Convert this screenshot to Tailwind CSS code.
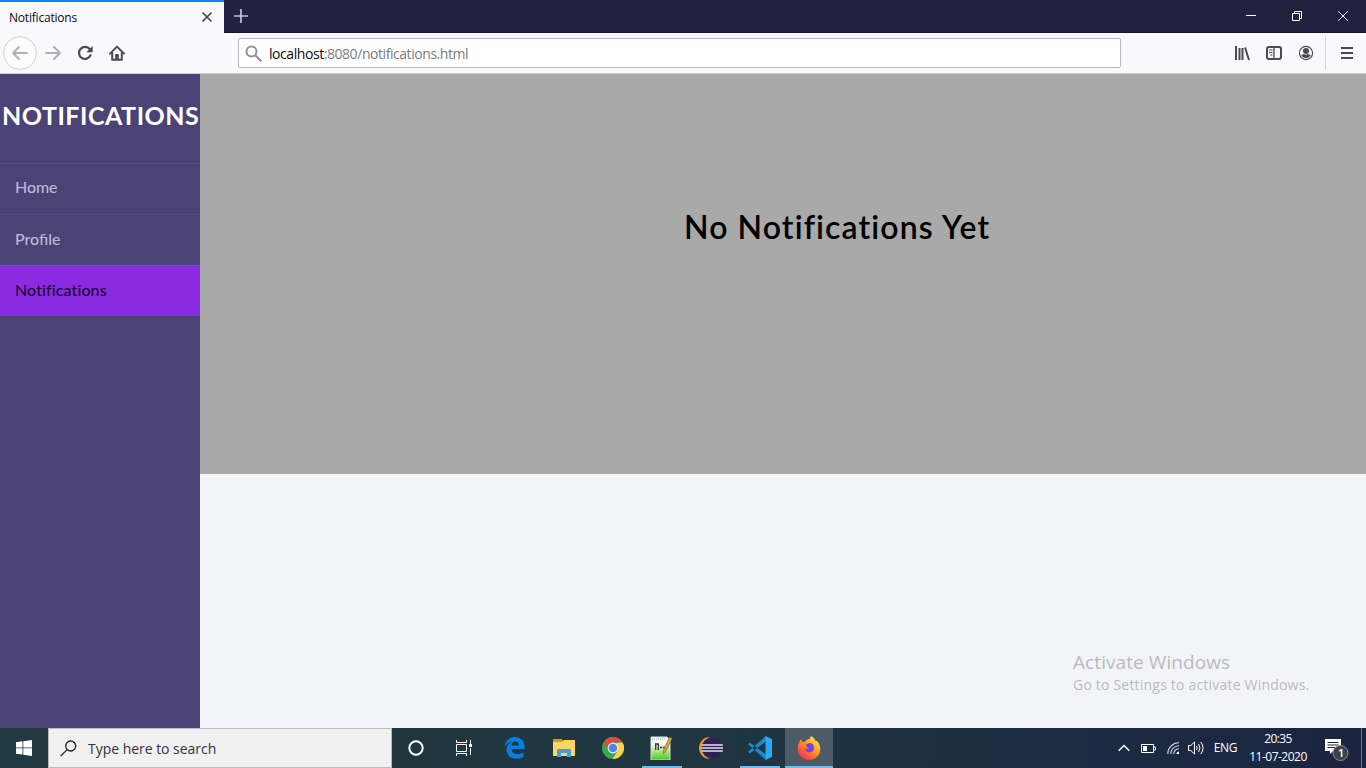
<!DOCTYPE html>
<html lang="en">
<head>
<meta charset="utf-8">
<title>Notifications</title>
<script src="https://cdn.jsdelivr.net/npm/@tailwindcss/browser@4"></script>
</head>
<body class="w-[1366px] h-[768px] overflow-hidden flex flex-col bg-[#f3f4f9] font-['Open_Sans',sans-serif] whitespace-nowrap">
<!-- tab strip -->
<header class="h-[33px] shrink-0 flex bg-[#20223f] border-b border-[#141629]">
  <div class="w-[224px] h-[33px] shrink-0 flex items-center justify-between bg-[#f9f9fb] border-t-2 border-[#0a84ff] pl-[9px] pr-[11px] text-[12px] text-[#0c0c0d]">
    <span id="tab" class="tracking-[-0.2px]">Notifications</span>
    <svg class="w-3 h-3 -mt-[2px]" viewBox="0 0 12 12" fill="none" stroke="#444448" stroke-width="1.6"><path d="M1.5 1.5l9 9M10.500 1.500l-9 9"/></svg>
  </div>
  <svg class="w-4 h-4 mt-2 ml-[9px]" viewBox="0 0 16 16" fill="none" stroke="#c4c4d4" stroke-width="1.7"><path d="M8 1v14M1 8h14"/></svg>
  <div class="ml-auto flex pt-[10px] pr-[17px] gap-[34px]">
    <svg class="w-3 h-3" viewBox="0 0 12 12" stroke="#fff"><path d="M1 5.500h10"/></svg>
    <svg class="w-3 h-3" viewBox="0 0 12 12" fill="none" stroke="#fff"><path d="M1.500 3.500h7v7h-7zM3.500 3.500v-2h7v7h-2"/></svg>
    <svg class="w-3 h-3" viewBox="0 0 12 12" fill="none" stroke="#e4e4ef"><path d="M1 1l10 10M11 1L1 11"/></svg>
  </div>
</header>
<!-- toolbar -->
<nav class="h-[41px] shrink-0 flex items-center bg-[#f9f9fb] border-b border-[#cfcfd2] pl-[3px]">
  <svg class="w-[34px] h-[34px]" viewBox="0 0 34 34" fill="none"><circle cx="17" cy="17" r="16.400" fill="#fcfcfd" stroke="#d0d0d3"/><path d="M24 17H10M16 11L10 17l6 6" stroke="#b0b0b2" stroke-width="2" stroke-linecap="round" stroke-linejoin="round"/></svg>
  <svg class="w-4 h-4 ml-2" viewBox="0 0 16 16" fill="none" stroke="#b0b0b2" stroke-width="2" stroke-linecap="round" stroke-linejoin="round"><path d="M1 8h14M9 2l6 6-6 6"/></svg>
  <svg class="w-4 h-4 ml-4" viewBox="0 0 16 16"><path d="M12.800 4.200A6 6 0 1 0 13.500 10.300" fill="none" stroke="#4a4a4f" stroke-width="2.200" stroke-linecap="round"/><path d="M15.600 1v6.200H9.400z" fill="#4a4a4f"/></svg>
  <svg class="w-4 h-4 ml-4" viewBox="0 0 16 16" fill="none" stroke="#4a4a4f" stroke-linejoin="round" stroke-linecap="round"><path d="M1 8.600L8 1.600l7 7" stroke-width="2"/><path d="M3.200 8v6.800h9.600V8" stroke-width="2"/><path d="M7 14v-4h2v4" stroke-width="1.800"/></svg>
  <div class="ml-[113px] w-[883px] h-[30px] flex items-center bg-white border border-[#b9b9bd] rounded-[2px] pl-[6px]">
    <svg class="w-[17px] h-[17px]" viewBox="0 0 17 17" fill="none" stroke="#929294" stroke-width="2" stroke-linecap="round"><circle cx="6.500" cy="6.500" r="5"/><path d="M10.300 10.300l5.500 5.500"/></svg>
    <span id="url" class="ml-[7px] text-[14px] text-[#7b7b7e] tracking-[-0.44px] font-['Open_Sans']"><span class="text-[#0c0c0d]">localhost</span>:8080/notifications.html</span>
  </div>
  <svg class="w-4 h-4 ml-[113px]" viewBox="0 0 16 16" stroke="#4a4a4f" stroke-width="2"><path d="M2 1v14M5.500 3v12M8.500 3v12M11 2.500L15 15"/></svg>
  <svg class="w-4 h-4 ml-4" viewBox="0 0 16 16" fill="none" stroke="#4a4a4f"><rect x="1" y="2" width="14" height="12" rx="2" stroke-width="2"/><path d="M8 2v12" stroke-width="1.300"/><path d="M3 5h3.500M3 7.500h3.500M4 10h2.500"/></svg>
  <svg class="w-4 h-4 ml-4" viewBox="0 0 16 16"><circle cx="8" cy="8" r="6.600" fill="none" stroke="#4a4a4f" stroke-width="1.100"/><circle cx="8" cy="6" r="3" fill="#4a4a4f"/><path d="M3.200 10c1.200-.5 2-.8 2.700-1.100 1.200 1 3 1 4.200 0 .7.300 1.500.6 2.700 1.100-.8 1.800-2.600 3.100-4.800 3.100S4 11.800 3.200 10z" fill="#4a4a4f"/></svg>
  <i class="ml-[11px] w-px h-[34px] bg-[#d7d7db]"></i>
  <svg class="w-[14px] h-4 ml-[14px]" viewBox="0 0 14 16" stroke="#4a4a4f" stroke-width="2"><path d="M1 3h12M1 8h12M1 13h12"/></svg>
</nav>
<!-- web page -->
<div class="h-[654px] shrink-0 flex font-['Lato',sans-serif]">
  <aside class="w-[200px] shrink-0 bg-[#4b4276]">
    <h1 class="h-[89px] pt-[22px] pl-[2px] text-[25px] leading-[38px] font-bold text-white"><span id="brand" class="tracking-[0.52px]">NOTIFICATIONS</span></h1>
    <ul class="text-[16px] font-medium text-[#bdb8d7]">
      <li class="h-[51px] pl-[15px] leading-[46px] border-t border-[#544b7f]"><span id="home" class="tracking-[-0.1px]">Home</span></li>
      <li class="h-[51px] pl-[15px] leading-[48px] border-t border-[#544b7f]"><span id="profile" class="tracking-[0px]">Profile</span></li>
      <li class="h-[51px] pl-[15px] leading-[48px] border-t border-[#8f45da] bg-[#8a2be2] text-[#1c0635]"><span id="notif" class="tracking-[0.1px]">Notifications</span></li>
    </ul>
  </aside>
  <main class="flex-1 flex flex-col">
    <section class="h-[400px] bg-[#a9a9a9] pt-[129px] pl-[484px]">
      <h2 class="text-[32px] leading-[48px] font-semibold text-black"><span id="big" class="tracking-[1.1px]">No Notifications Yet</span></h2>
    </section>
    <div class="ml-auto mt-[175px] w-[293px] text-[#b9bbbf] font-['Open_Sans',sans-serif]">
      <p class="text-[19px] leading-[27px]"><span id="act" class="tracking-[0.08px]">Activate Windows</span></p>
      <p class="text-[14px] leading-[18px]"><span id="go" class="tracking-[0.2px]">Go to Settings to activate Windows.</span></p>
    </div>
  </main>
</div>
<!-- taskbar -->
<footer class="h-10 shrink-0 flex bg-linear-to-r from-[#213940] via-[#203641] to-[#1b2441]">
  <div class="w-12 flex items-center justify-center"><svg class="w-4 h-4" viewBox="0 0 16 16" fill="#fff"><path d="M0 2.200l6.500-.9v6.200H0zM7.300 1.200L16 0v7.500H7.300zM0 8.300h6.500v6.300L0 13.700zM7.300 8.300H16V16l-8.700-1.300z"/></svg></div>
  <div class="w-[344px] flex items-center bg-[#f1f1f1] border border-[#b9bcbd] pl-[11px] text-[14px] text-[#343434]">
    <svg class="w-[17px] h-[17px]" viewBox="0 0 17 17" fill="none" stroke="#222" stroke-width="1.300"><circle cx="10.700" cy="6" r="5"/><path d="M7.200 9.600L.7 16"/></svg>
    <span id="search" class="ml-[11px] tracking-[-0.03px]">Type here to search</span>
  </div>
  <div class="w-12 flex items-center justify-center"><svg class="w-4 h-4" viewBox="0 0 16 16"><circle cx="8" cy="8" r="6.700" fill="none" stroke="#fff" stroke-width="2"/></svg></div>
  <div class="w-12 flex items-center justify-center"><svg class="w-4 h-4" viewBox="0 0 16 16" fill="none" stroke="#fff"><path d="M.5 0v2.500h10V0M.5 16v-2.500h10V16M.5 4.500h10v7H.5zM14.500 0v4M14.500 8v7"/><path d="M13 4h3v3h-3z" fill="#fff" stroke="none"/></svg></div>
  <div class="w-[54px] pr-[2px] flex items-center justify-center"><svg class="w-[21px] h-[22px]" viewBox="0 0 21 22"><path fill="#0b7ddd" d="M.5 9.600C1.500 4 5 0 11 0c6 0 9.500 4.300 9.500 9.700v2.400H7.400c.2 3.600 3.200 5 6.400 5 2 0 3.800-.6 5.600-1.600v4.600c-2 1-4.300 1.600-6.800 1.600-6.100 0-10.100-3.600-10.100-9.100C2.500 9.200 4.500 6.300 8 4.700 4.800 5.200 2.300 7 .5 9.600zm7-1h7.300c.1-2.500-1.200-4-3.400-4-2.300 0-3.600 1.700-3.900 4z"/></svg></div>
  <div class="w-11 flex items-center justify-center"><svg class="w-[22px] h-[18px]" viewBox="0 0 22 18"><path d="M0 0h9l1 2h11v5H0z" fill="#d99a0b"/><path d="M0 3h9l2-2h11v16H0z" fill="#fbd667"/><path d="M4 18v-7q0-1 1-1h12q1 0 1 1v7h-4v-4H8v4z" fill="#469fcc"/></svg></div>
  <div class="w-[54px] flex items-center justify-center"><svg class="w-[22px] h-[22px]" viewBox="0 0 22 22"><circle cx="11" cy="11" r="11" fill="#36a852"/><path d="M1.500 5.500A11 11 0 0 1 20.500 5.500H11L6.200 13.700z" fill="#df4b3c"/><path d="M20.500 5.500A11 11 0 0 1 10.500 22l5.300-8.200L14 6z" fill="#ffd04b"/><circle cx="11" cy="11" r="5.400" fill="#f3f3f3"/><circle cx="11" cy="11" r="4.300" fill="#4a89e8"/></svg></div>
  <div class="w-10 h-full ml-[2px] pr-[3px] flex items-center justify-center border-b-2 border-[#76b9ed]"><svg class="w-[24px] h-[24px] mt-[2px]" viewBox="0 0 24 24"><defs><linearGradient id="ng" x2="0" y2="1"><stop offset=".3" stop-color="#fafdf5"/><stop offset="1" stop-color="#47c814"/></linearGradient></defs><path d="M2 1h16l3 3v20H2z" fill="url(#ng)" stroke="#d8ddd4"/><path d="M3 3h14" stroke="#999" stroke-dasharray="1 1"/><path d="M6.700 14V8M9.300 14V8M6 8h4M11 11.500h2m1 0h2" fill="none" stroke="#333" stroke-width="1.300"/><path d="M20.500 1l2.500 1.500L16.500 16l-2.500 2 .3-3.300z" fill="#d9a338" stroke="#805d22" stroke-width=".6"/></svg></div>
  <div class="w-[60px] pr-[2px] flex items-center justify-center"><svg class="w-6 h-[22px]" viewBox="0 0 24 22"><path d="M11 0A11 11 0 0 0 11 22A13 13 0 0 1 11 0z" fill="#f29a27"/><circle cx="13" cy="11" r="10.500" fill="#2c2255"/><path d="M2.700 8h21.100M2.400 11h21.600M2.700 14h21.100" stroke="#e6e3f0" stroke-width="1.700"/></svg></div>
  <div class="w-10 h-full -ml-[2px] flex items-center justify-center border-b-2 border-[#76b9ed]"><svg class="w-6 h-6 mt-[2px]" viewBox="0 0 24 24"><path d="M0 8.300l2-1.800L18 18.600V24zM0 15.700l2 1.800L18 5.400V0z" fill="#168bd0"/><path d="M17.500 0L24 3v18l-6.500 3z" fill="#29a9f2"/></svg></div>
  <div class="w-12 h-full ml-[5px] flex items-center justify-center bg-[#4c5b66] border-b-2 border-[#76b9ed]"><svg class="w-6 h-6 mt-[1px]" viewBox="0 0 24 24"><defs><linearGradient id="fx" x1=".9" y1=".1" x2=".2" y2="1"><stop stop-color="#fff044"/><stop offset=".45" stop-color="#ff9420"/><stop offset="1" stop-color="#f52655"/></linearGradient></defs><path d="M2.800 5L4 3l1.500 3L8 5.700C9 4 11 3 12.500 3L14 0c3 2 4 3 4.500 5L20 5c2 2 3.300 5 3.300 8a11.300 10.800 0 0 1-22.600 0C.7 10 1.300 7 2.800 5z" fill="url(#fx)"/><path d="M9 8.500c1.500-.3 2-1.500 4-1.500 2.500 0 4 2.200 4 4.700 0 2.800-2.200 4.500-4.800 4.500S8 14.500 8 12.500c1 .8 2.600.6 4-.5L9.500 11z" fill="#7542e5"/></svg></div>
  <!-- system tray -->
  <div class="ml-auto flex items-center text-white">
    <svg class="w-3 h-2" viewBox="0 0 12 8" fill="none" stroke="#fff" stroke-width="1.400"><path d="M.7 6.700L6 1.400l5.300 5.300"/></svg>
    <svg class="w-[15px] h-[9px] ml-[11px]" viewBox="0 0 15 9"><path d="M.5.500h12v8H.5zM13 3h1.500v3H13" fill="none" stroke="#fff"/><path d="M2 2h4v5H2z" fill="#fff"/></svg>
    <svg class="w-[13px] h-[13px] ml-[11px]" viewBox="0 0 13 13" fill="none" stroke="#d7dce4"><path d="M.8 12A11 11 0 0 1 12 .8M3.800 12A8 8 0 0 1 12 3.800M6.800 12A5 5 0 0 1 12 6.800" stroke-width="1.100"/><path d="M9.500 12a2.500 2.500 0 0 1 2.500-2.500V12z" fill="#fff" stroke="none"/></svg>
    <svg class="w-[17px] h-[14px] ml-[8px]" viewBox="0 0 17 14" fill="none" stroke="#fff"><path d="M.5 4.500h2.300L6.500 1v12L2.800 9.500H.5zM8.500 5q1.500 2 0 4M10.500 3q3 4 0 8M12.800 1q4.500 6 0 12"/></svg>
    <span id="eng" class="ml-[9px] text-[12px] tracking-[-0.4px]">ENG</span>
    <div class="ml-[11px] w-[60px] text-center text-[12px] leading-[18px]"><p><span id="time" class="tracking-[-0.65px]">20:35</span></p><p><span id="date" class="tracking-[-0.5px]">11-07-2020</span></p></div>
    <div class="relative w-[25px] h-[24px] ml-[16px] mt-[2px]">
      <svg class="w-[25px] h-6" viewBox="0 0 25 24"><path d="M1 2h16v12H9l-3 3v-3H1z" fill="#fff"/><path d="M3.500 5.500h11M3.500 8h11M3.500 10.500h8" stroke="#1b2441"/><circle cx="16.500" cy="16" r="7.500" fill="#3b414a" stroke="#8b9199"/></svg>
      <span class="absolute left-[14px] top-[8px] text-[11px] leading-4 font-semibold">1</span>
    </div>
    <i class="ml-[12px] w-px h-10 bg-[#707990]"></i><i class="w-1"></i>
  </div>
</footer>
</body>
</html>
